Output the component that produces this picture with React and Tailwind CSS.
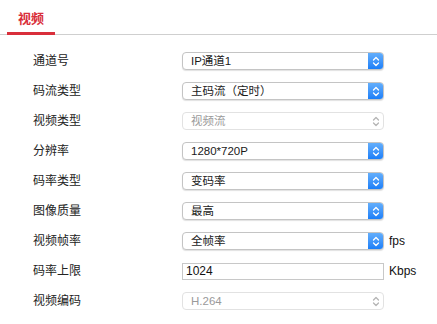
import React from "react";

const ROWS = [
    { label: "通道号", type: "select", value: "IP通道1" },
    { label: "码流类型", type: "select", value: "主码流（定时）" },
    { label: "视频类型", type: "disabled", value: "视频流" },
    { label: "分辨率", type: "select", value: "1280*720P" },
    { label: "码率类型", type: "select", value: "变码率" },
    { label: "图像质量", type: "select", value: "最高" },
    { label: "视频帧率", type: "select", value: "全帧率", unit: "fps" },
    { label: "码率上限", type: "input", value: "1024", unit: "Kbps" },
    { label: "视频编码", type: "disabled", value: "H.264" },
];

const Chevrons = ({ color }) => (
    <svg width="8" height="11" viewBox="0 0 8 11" fill="none" stroke={color} strokeWidth="1.3" strokeLinecap="round" strokeLinejoin="round">
        <path d="M1.5 4L4 1.5L6.5 4" />
        <path d="M1.5 7L4 9.5L6.5 7" />
    </svg>
);

const Select = ({ value, disabled }) => (
    <div
        className={`flex h-[18px] w-[202px] items-center overflow-hidden rounded-[4px] border bg-white ${
            disabled
                ? "border-[#e2e2e2] text-[#9a9a9a]"
                : "border-[#c4c4c4] text-[#1a1a1a] shadow-[0_1px_1px_rgba(0,0,0,0.12)]"
        }`}
    >
        <span className="flex-1 truncate pl-[8px] text-[11.5px] leading-[16px]">{value}</span>
        {disabled ? (
            <div className="flex h-full w-[15px] items-center justify-center">
                <Chevrons color="#b5b5b5" />
            </div>
        ) : (
            <div className="flex h-full w-[15px] items-center justify-center bg-gradient-to-b from-[#63aefb] to-[#1a7ff9]">
                <Chevrons color="#ffffff" />
            </div>
        )}
    </div>
);

export default function App() {
    return (
        <div
            className="h-[324px] w-[437px] bg-white text-[#222]"
            style={{ fontFamily: '"Liberation Sans", "Noto Sans CJK SC", sans-serif' }}
        >
            <div className="flex h-[35px] items-end border-b border-[#cfcfcf] pl-[7px]">
                <div className="relative -mb-px flex h-[35px] w-[48px] items-center justify-center border-b-[3px] border-[#d92f3b] pt-[5px]">
                    <span className="text-[13px] font-bold text-[#d92f3b]">视频</span>
                </div>
            </div>

            <div className="flex flex-col pt-[11px]">
                {ROWS.map((row) => (
                    <div key={row.label} className="flex h-[30px] items-center">
                        <div className="w-[182px] pl-[33px] text-[12px] text-[#222]">{row.label}</div>
                        {row.type === "input" ? (
                            <div className="flex h-[17px] w-[202px] items-center border border-[#c8c8c8] bg-white pl-[3px] text-[12px] text-[#111]">
                                {row.value}
                            </div>
                        ) : (
                            <Select value={row.value} disabled={row.type === "disabled"} />
                        )}
                        {row.unit && <span className="ml-[5px] text-[12px] text-[#111]">{row.unit}</span>}
                    </div>
                ))}
            </div>
        </div>
    );
}
